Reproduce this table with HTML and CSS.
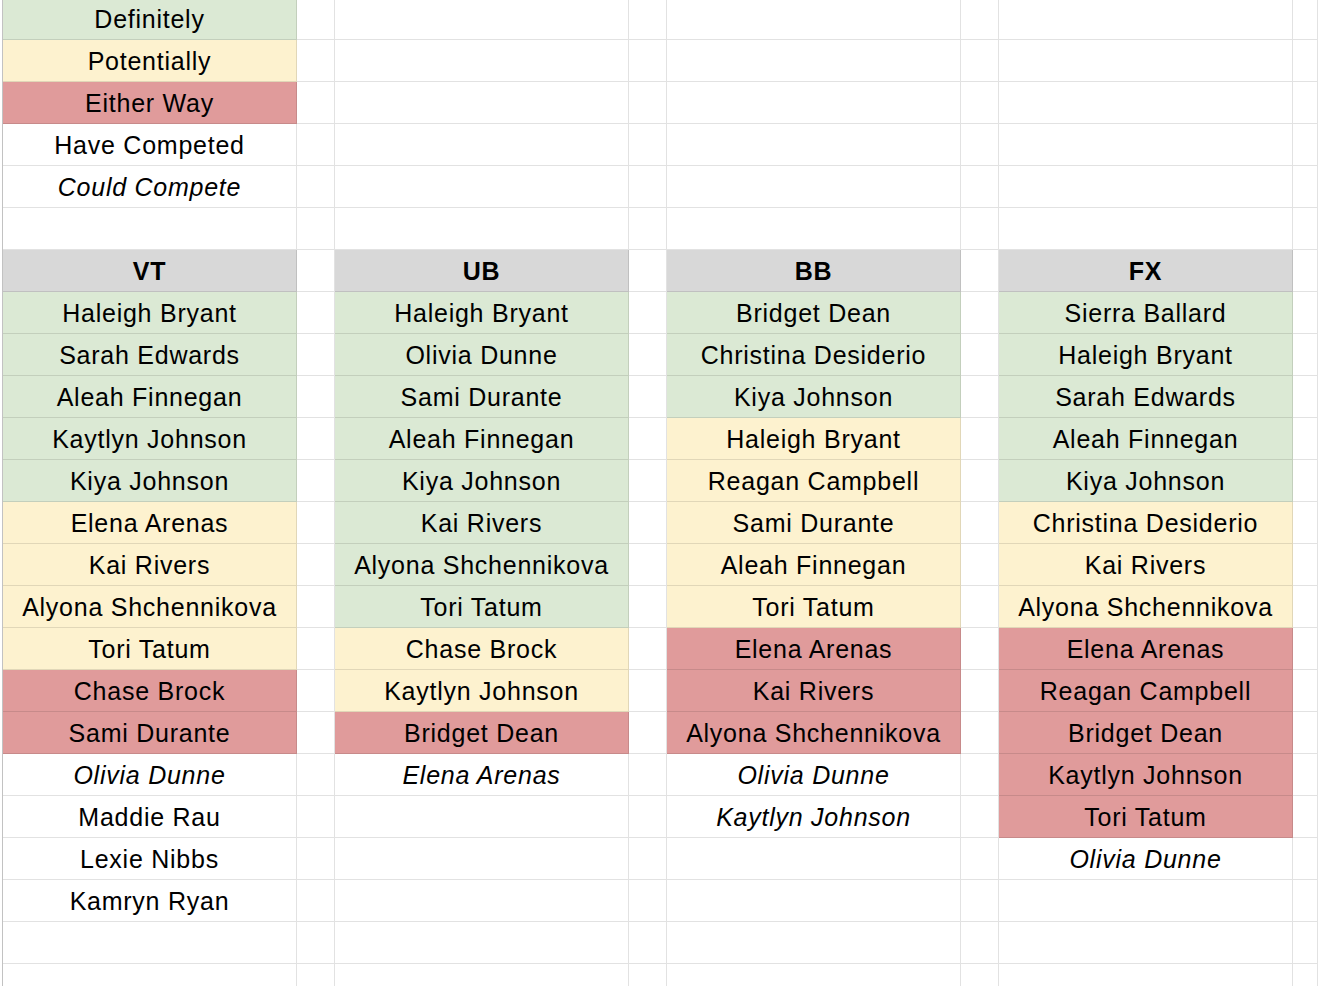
FILE: index.html
```html
<!DOCTYPE html>
<html>
<head>
<meta charset="utf-8">
<title>Sheet</title>
<link rel="stylesheet" href="styles.css">
</head>
<body>
<div class="sheet">
  <div class="col">
    <div class="c g">Definitely</div>
    <div class="c y">Potentially</div>
    <div class="c r">Either Way</div>
    <div class="c">Have Competed</div>
    <div class="c i">Could Compete</div>
    <div class="c"></div>
    <div class="c h">VT</div>
    <div class="c g">Haleigh Bryant</div>
    <div class="c g">Sarah Edwards</div>
    <div class="c g">Aleah Finnegan</div>
    <div class="c g">Kaytlyn Johnson</div>
    <div class="c g">Kiya Johnson</div>
    <div class="c y">Elena Arenas</div>
    <div class="c y">Kai Rivers</div>
    <div class="c y">Alyona Shchennikova</div>
    <div class="c y">Tori Tatum</div>
    <div class="c r">Chase Brock</div>
    <div class="c r">Sami Durante</div>
    <div class="c i">Olivia Dunne</div>
    <div class="c">Maddie Rau</div>
    <div class="c">Lexie Nibbs</div>
    <div class="c">Kamryn Ryan</div>
  </div>
  <div class="gap"></div>
  <div class="col">
    <div class="c"></div>
    <div class="c"></div>
    <div class="c"></div>
    <div class="c"></div>
    <div class="c"></div>
    <div class="c"></div>
    <div class="c h">UB</div>
    <div class="c g">Haleigh Bryant</div>
    <div class="c g">Olivia Dunne</div>
    <div class="c g">Sami Durante</div>
    <div class="c g">Aleah Finnegan</div>
    <div class="c g">Kiya Johnson</div>
    <div class="c g">Kai Rivers</div>
    <div class="c g">Alyona Shchennikova</div>
    <div class="c g">Tori Tatum</div>
    <div class="c y">Chase Brock</div>
    <div class="c y">Kaytlyn Johnson</div>
    <div class="c r">Bridget Dean</div>
    <div class="c i">Elena Arenas</div>
  </div>
  <div class="gap"></div>
  <div class="col">
    <div class="c"></div>
    <div class="c"></div>
    <div class="c"></div>
    <div class="c"></div>
    <div class="c"></div>
    <div class="c"></div>
    <div class="c h">BB</div>
    <div class="c g">Bridget Dean</div>
    <div class="c g">Christina Desiderio</div>
    <div class="c g">Kiya Johnson</div>
    <div class="c y">Haleigh Bryant</div>
    <div class="c y">Reagan Campbell</div>
    <div class="c y">Sami Durante</div>
    <div class="c y">Aleah Finnegan</div>
    <div class="c y">Tori Tatum</div>
    <div class="c r">Elena Arenas</div>
    <div class="c r">Kai Rivers</div>
    <div class="c r">Alyona Shchennikova</div>
    <div class="c i">Olivia Dunne</div>
    <div class="c i">Kaytlyn Johnson</div>
  </div>
  <div class="gap"></div>
  <div class="col">
    <div class="c"></div>
    <div class="c"></div>
    <div class="c"></div>
    <div class="c"></div>
    <div class="c"></div>
    <div class="c"></div>
    <div class="c h">FX</div>
    <div class="c g">Sierra Ballard</div>
    <div class="c g">Haleigh Bryant</div>
    <div class="c g">Sarah Edwards</div>
    <div class="c g">Aleah Finnegan</div>
    <div class="c g">Kiya Johnson</div>
    <div class="c y">Christina Desiderio</div>
    <div class="c y">Kai Rivers</div>
    <div class="c y">Alyona Shchennikova</div>
    <div class="c r">Elena Arenas</div>
    <div class="c r">Reagan Campbell</div>
    <div class="c r">Bridget Dean</div>
    <div class="c r">Kaytlyn Johnson</div>
    <div class="c r">Tori Tatum</div>
    <div class="c i">Olivia Dunne</div>
  </div>
  <div class="gap rest"></div>
</div>
</body>
</html>
```

FILE: styles.css
```css
html, body {
  margin: 0;
  padding: 0;
  background: #ffffff;
  overflow: hidden;
}

body {
  font-family: "Liberation Sans", Arial, sans-serif;
  color: #000000;
}

.sheet {
  display: flex;
  height: 1000px;
  margin-top: -2px;
  margin-left: 2px;
  border-left: 1px solid #c2c2c2;
}

.col,
.gap {
  flex: none;
  background-image:
    linear-gradient(to left, #e2e2e2 1px, transparent 1px),
    repeating-linear-gradient(to bottom, transparent 0 41px, #e2e2e2 41px 42px);
}

.col {
  width: 294px;
}

.gap {
  width: 38px;
}

.rest {
  flex: 1;
}

.c {
  box-sizing: border-box;
  height: 42px;
  display: flex;
  align-items: center;
  justify-content: center;
  padding-top: 2px;
  font-size: 25px;
  letter-spacing: 0.75px;
  white-space: nowrap;
  border-right: 1px solid transparent;
  border-bottom: 1px solid transparent;
}

.g,
.y,
.r,
.h {
  border-right-color: rgba(0, 0, 0, 0.11);
  border-bottom-color: rgba(0, 0, 0, 0.11);
}

.g { background: #dbe9d4; }
.y { background: #fdf2cf; }
.r { background: #e09b9b; }
.h {
  background: #d8d8d8;
  font-weight: bold;
}

.i {
  font-style: italic;
}
```
